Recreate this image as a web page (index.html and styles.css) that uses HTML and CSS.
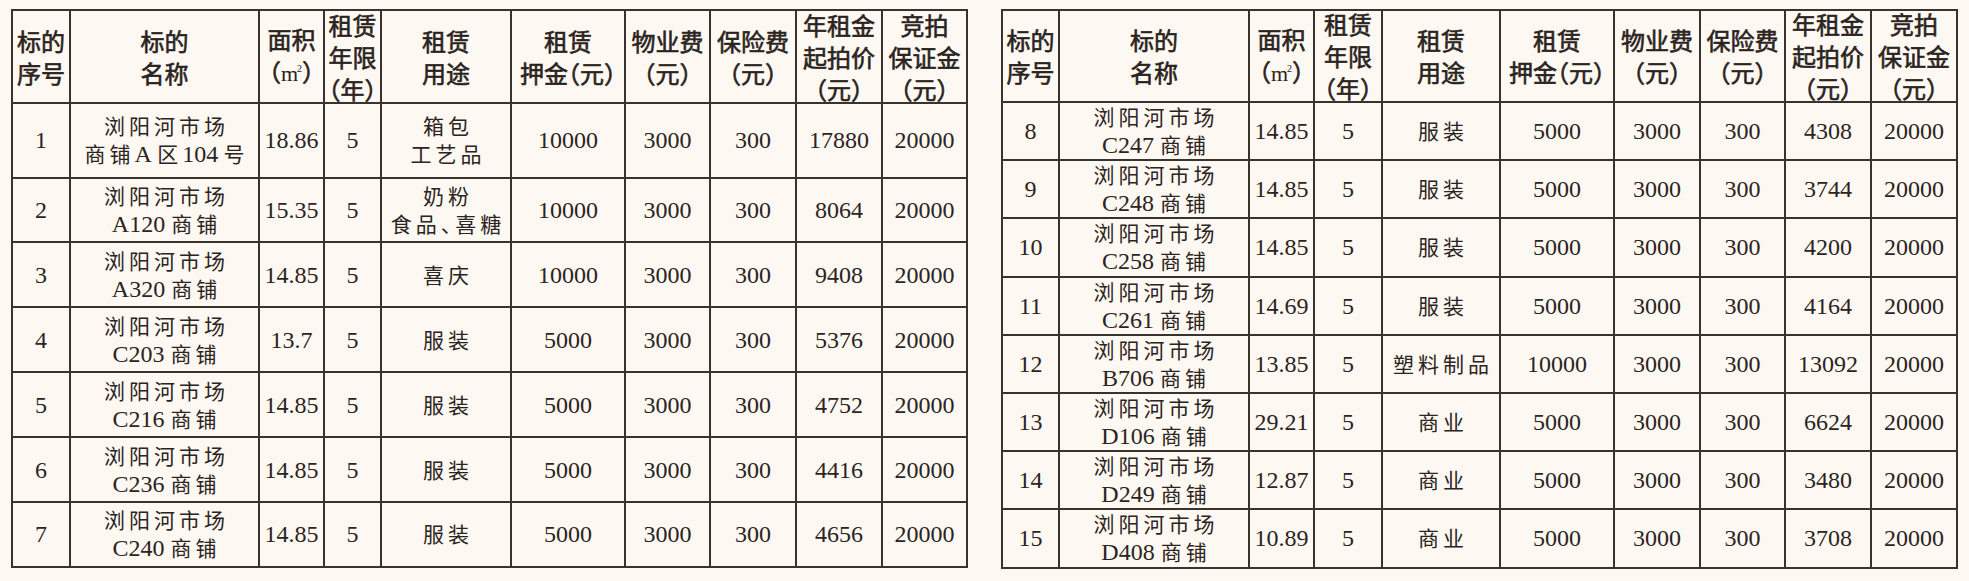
FILE: index.html
```html
<!DOCTYPE html>
<html lang="zh-CN">
<head>
<meta charset="utf-8">
<title>浏阳河市场商铺租赁标的</title>
<link rel="stylesheet" href="styles.css">
</head>
<body>
<div class="page">
  <table class="lot lot-left">
    <colgroup>
      <col class="w-seq"><col class="w-name"><col class="w-area"><col class="w-term"><col class="w-use">
      <col class="w-dep"><col class="w-fee"><col class="w-ins"><col class="w-rent"><col class="w-bond">
    </colgroup>
    <thead>
      <tr>
        <th><div class="hc"><div>标的<br>序号</div></div></th>
        <th><div class="hc"><div>标的<br>名称</div></div></th>
        <th><div class="hc"><div>面积<br>（<span class="sq">m<sup>2</sup></span>）</div></div></th>
        <th><div class="hc"><div>租赁<br>年限<br>（年）</div></div></th>
        <th><div class="hc"><div>租赁<br>用途</div></div></th>
        <th><div class="hc"><div>租赁<br>押金（元）</div></div></th>
        <th><div class="hc"><div>物业费<br>（元）</div></div></th>
        <th><div class="hc"><div>保险费<br>（元）</div></div></th>
        <th><div class="hc"><div>年租金<br>起拍价<br>（元）</div></div></th>
        <th><div class="hc"><div>竞拍<br>保证金<br>（元）</div></div></th>
      </tr>
    </thead>
    <tbody>
      <tr class="row-tall">
        <td>1</td>
        <td class="zc"><span class="zh">浏阳河市场</span><br><span class="zh">商铺</span>A<span class="zh">&#8202;区</span>104<span class="zh">&#8202;号</span></td>
        <td>18.86</td><td>5</td>
        <td class="zc"><span class="zh">箱包</span><br><span class="zh">工艺品</span></td>
        <td>10000</td><td>3000</td><td>300</td><td>17880</td><td>20000</td>
      </tr>
      <tr class="row-l">
        <td>2</td>
        <td class="zc"><span class="zh">浏阳河市场</span><br>A120 <span class="zh">商铺</span></td>
        <td>15.35</td><td>5</td>
        <td class="zc"><span class="zh">奶粉</span><br><span class="zh">食品、喜糖</span></td>
        <td>10000</td><td>3000</td><td>300</td><td>8064</td><td>20000</td>
      </tr>
      <tr class="row-l">
        <td>3</td>
        <td class="zc"><span class="zh">浏阳河市场</span><br>A320 <span class="zh">商铺</span></td>
        <td>14.85</td><td>5</td>
        <td class="zc"><span class="zh">喜庆</span></td>
        <td>10000</td><td>3000</td><td>300</td><td>9408</td><td>20000</td>
      </tr>
      <tr class="row-l">
        <td>4</td>
        <td class="zc"><span class="zh">浏阳河市场</span><br>C203 <span class="zh">商铺</span></td>
        <td>13.7</td><td>5</td>
        <td class="zc"><span class="zh">服装</span></td>
        <td>5000</td><td>3000</td><td>300</td><td>5376</td><td>20000</td>
      </tr>
      <tr class="row-l">
        <td>5</td>
        <td class="zc"><span class="zh">浏阳河市场</span><br>C216 <span class="zh">商铺</span></td>
        <td>14.85</td><td>5</td>
        <td class="zc"><span class="zh">服装</span></td>
        <td>5000</td><td>3000</td><td>300</td><td>4752</td><td>20000</td>
      </tr>
      <tr class="row-l">
        <td>6</td>
        <td class="zc"><span class="zh">浏阳河市场</span><br>C236 <span class="zh">商铺</span></td>
        <td>14.85</td><td>5</td>
        <td class="zc"><span class="zh">服装</span></td>
        <td>5000</td><td>3000</td><td>300</td><td>4416</td><td>20000</td>
      </tr>
      <tr class="row-l">
        <td>7</td>
        <td class="zc"><span class="zh">浏阳河市场</span><br>C240 <span class="zh">商铺</span></td>
        <td>14.85</td><td>5</td>
        <td class="zc"><span class="zh">服装</span></td>
        <td>5000</td><td>3000</td><td>300</td><td>4656</td><td>20000</td>
      </tr>
    </tbody>
  </table>

  <table class="lot lot-right">
    <colgroup>
      <col class="w-seq"><col class="w-name"><col class="w-area"><col class="w-term"><col class="w-use">
      <col class="w-dep"><col class="w-fee"><col class="w-ins"><col class="w-rent"><col class="w-bond">
    </colgroup>
    <thead>
      <tr>
        <th><div class="hc"><div>标的<br>序号</div></div></th>
        <th><div class="hc"><div>标的<br>名称</div></div></th>
        <th><div class="hc"><div>面积<br>（<span class="sq">m<sup>2</sup></span>）</div></div></th>
        <th><div class="hc"><div>租赁<br>年限<br>（年）</div></div></th>
        <th><div class="hc"><div>租赁<br>用途</div></div></th>
        <th><div class="hc"><div>租赁<br>押金（元）</div></div></th>
        <th><div class="hc"><div>物业费<br>（元）</div></div></th>
        <th><div class="hc"><div>保险费<br>（元）</div></div></th>
        <th><div class="hc"><div>年租金<br>起拍价<br>（元）</div></div></th>
        <th><div class="hc"><div>竞拍<br>保证金<br>（元）</div></div></th>
      </tr>
    </thead>
    <tbody>
      <tr class="row-r">
        <td>8</td>
        <td class="zc"><span class="zh">浏阳河市场</span><br>C247 <span class="zh">商铺</span></td>
        <td>14.85</td><td>5</td>
        <td class="zc"><span class="zh">服装</span></td>
        <td>5000</td><td>3000</td><td>300</td><td>4308</td><td>20000</td>
      </tr>
      <tr class="row-r">
        <td>9</td>
        <td class="zc"><span class="zh">浏阳河市场</span><br>C248 <span class="zh">商铺</span></td>
        <td>14.85</td><td>5</td>
        <td class="zc"><span class="zh">服装</span></td>
        <td>5000</td><td>3000</td><td>300</td><td>3744</td><td>20000</td>
      </tr>
      <tr class="row-r">
        <td>10</td>
        <td class="zc"><span class="zh">浏阳河市场</span><br>C258 <span class="zh">商铺</span></td>
        <td>14.85</td><td>5</td>
        <td class="zc"><span class="zh">服装</span></td>
        <td>5000</td><td>3000</td><td>300</td><td>4200</td><td>20000</td>
      </tr>
      <tr class="row-r">
        <td>11</td>
        <td class="zc"><span class="zh">浏阳河市场</span><br>C261 <span class="zh">商铺</span></td>
        <td>14.69</td><td>5</td>
        <td class="zc"><span class="zh">服装</span></td>
        <td>5000</td><td>3000</td><td>300</td><td>4164</td><td>20000</td>
      </tr>
      <tr class="row-r">
        <td>12</td>
        <td class="zc"><span class="zh">浏阳河市场</span><br>B706 <span class="zh">商铺</span></td>
        <td>13.85</td><td>5</td>
        <td class="zc"><span class="zh">塑料制品</span></td>
        <td>10000</td><td>3000</td><td>300</td><td>13092</td><td>20000</td>
      </tr>
      <tr class="row-r">
        <td>13</td>
        <td class="zc"><span class="zh">浏阳河市场</span><br>D106 <span class="zh">商铺</span></td>
        <td>29.21</td><td>5</td>
        <td class="zc"><span class="zh">商业</span></td>
        <td>5000</td><td>3000</td><td>300</td><td>6624</td><td>20000</td>
      </tr>
      <tr class="row-r">
        <td>14</td>
        <td class="zc"><span class="zh">浏阳河市场</span><br>D249 <span class="zh">商铺</span></td>
        <td>12.87</td><td>5</td>
        <td class="zc"><span class="zh">商业</span></td>
        <td>5000</td><td>3000</td><td>300</td><td>3480</td><td>20000</td>
      </tr>
      <tr class="row-r">
        <td>15</td>
        <td class="zc"><span class="zh">浏阳河市场</span><br>D408 <span class="zh">商铺</span></td>
        <td>10.89</td><td>5</td>
        <td class="zc"><span class="zh">商业</span></td>
        <td>5000</td><td>3000</td><td>300</td><td>3708</td><td>20000</td>
      </tr>
    </tbody>
  </table>
</div>
</body>
</html>
```

FILE: styles.css
```css
* { box-sizing: border-box; }

html, body {
  margin: 0;
  background: #fdf8f2;
}

body {
  color: #2b2421;
  font-family: "Liberation Serif", "Noto Sans CJK SC", serif;
}

.page {
  display: flex;
  align-items: flex-start;
  gap: 33px;
  padding: 9px 0 0 11px;
}

.lot {
  width: 957px;
  flex: none;
  border-collapse: collapse;
  table-layout: fixed;
}

.lot th,
.lot td {
  border: 2px solid #3a322f;
  padding: 0;
  text-align: center;
  vertical-align: middle;
  overflow: visible;
}

.lot th {
  font-family: "Noto Sans CJK SC", sans-serif;
  font-size: 24px;
  font-weight: 400;
  line-height: 32px;
  font-feature-settings: "halt";
  color: #2a2320;
  -webkit-text-stroke: 0.6px #2a2320;
}

.hc {
  height: 91px;
  display: flex;
  align-items: center;
  justify-content: center;
  white-space: nowrap;
}

.lot-right .hc { height: 90px; }

.sq {
  font-family: "Liberation Serif", serif;
  font-size: 22px;
  -webkit-text-stroke: 0;
}

.sq sup {
  font-size: 10px;
  vertical-align: 9px;
  line-height: 0;
  margin-left: -1px;
}

.lot td {
  font-family: "Liberation Serif", serif;
  font-size: 24px;
  line-height: 28px;
  white-space: nowrap;
}

.lot td.zc { padding-left: 4px; }

.zh {
  font-family: "Noto Sans CJK SC", sans-serif;
  font-size: 21px;
  line-height: 1;
  letter-spacing: 4px;
  font-feature-settings: "halt";
}

.row-tall { height: 74.5px; }
.row-l { height: 64.9px; }
.row-r { height: 58.2px; }

/* left table columns */
.lot-left .w-seq { width: 58px; }
.lot-left .w-name { width: 189px; }
.lot-left .w-area { width: 65px; }
.lot-left .w-term { width: 57px; }
.lot-left .w-use { width: 130px; }
.lot-left .w-dep { width: 114px; }
.lot-left .w-fee { width: 85px; }
.lot-left .w-ins { width: 86px; }
.lot-left .w-rent { width: 86px; }
.lot-left .w-bond { width: 85px; }

/* right table columns */
.lot-right .w-seq { width: 57px; }
.lot-right .w-name { width: 190px; }
.lot-right .w-area { width: 65px; }
.lot-right .w-term { width: 68px; }
.lot-right .w-use { width: 118px; }
.lot-right .w-dep { width: 114px; }
.lot-right .w-fee { width: 86px; }
.lot-right .w-ins { width: 85px; }
.lot-right .w-rent { width: 86px; }
.lot-right .w-bond { width: 86px; }
```
